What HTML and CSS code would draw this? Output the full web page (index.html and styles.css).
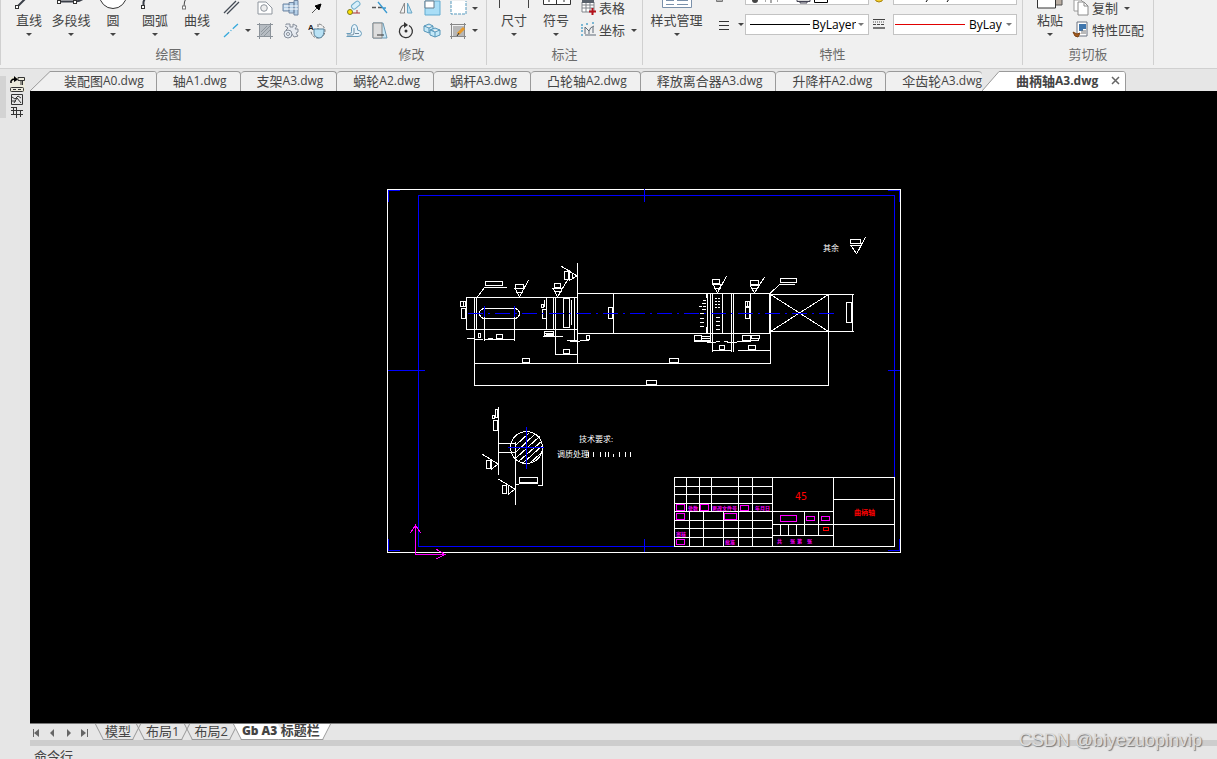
FILE: index.html
```html
<!DOCTYPE html>
<html lang="zh-CN">
<head>
<meta charset="utf-8">
<title>曲柄轴A3.dwg</title>
<link rel="stylesheet" href="styles.css">
</head>
<body>
<header class="ribbon">
  <section class="group group-draw">
    <div class="tools">
      <button class="big"><svg width="42" height="10"><path d="M10 6L18 -2" class="thick"/><rect x="7.5" y="5.5" width="3" height="3" class="node"/></svg><span>直线</span><i class="caret"></i></button>
      <button class="big"><svg width="42" height="10"><path d="M9 1.500H25Q31 1 34 -2" class="thick"/><rect x="7.500" y=".5" width="3" height="3" class="node"/><rect x="23.500" y=".5" width="3" height="3" class="node"/></svg><span>多段线</span><i class="caret"></i></button>
      <button class="big"><svg width="42" height="10"><circle cx="21" cy="-5" r="13.500" class="node"/></svg><span>圆</span><i class="caret"></i></button>
      <button class="big"><svg width="42" height="10"><path d="M9.500 5V2L11 -2" class="thick"/><rect x="7.500" y="5.500" width="3" height="3" class="node"/></svg><span>圆弧</span><i class="caret"></i></button>
      <button class="big"><svg width="42" height="10"><path d="M8 6Q8 2 10 -2" class="thin"/><rect x="6.500" y="6" width="3" height="3" class="node soft"/></svg><span>曲线</span><i class="caret"></i></button>
      <div class="icons icons-draw">
        <button aria-label="构造线"><svg width="18" height="18"><path d="M2 13L14 1M5 14L17 2" stroke="#444b55" stroke-width="1.300"/></svg></button>
        <span></span>
        <button aria-label="边界"><svg width="18" height="18"><path d="M2 2H10L16 8V14H2Z" fill="#fff" stroke="#8e959d"/><circle cx="8" cy="8" r="3.300" fill="#eee" stroke="#8e959d"/></svg></button>
        <button aria-label="轴"><svg width="18" height="18"><path d="M1 4H7V11H1ZM7 2.500H12V13H7ZM12 .5H16V15H12Z" fill="#b5d0e8" stroke="#7187a3"/><path d="M2 6H16M2 9H16" stroke="#fff"/></svg></button>
        <button aria-label="箭头"><svg width="18" height="18"><path d="M4 13L10 7" stroke="#555"/><path d="M13 4L11 10L7 6Z" fill="#000" stroke="#000"/></svg></button>
        <button aria-label="中心线"><svg width="18" height="18"><path d="M2 15L16 2" stroke="#36a9dc" stroke-width="1.300" stroke-dasharray="7 2 1 2"/></svg></button>
        <button class="drop" aria-label="更多中心线"><i class="caret"></i></button>
        <button aria-label="填充"><svg width="18" height="18"><rect x="4" y="3" width="10" height="11" fill="#b6bcc2"/><path d="M5 10L11 4M5 13L14 4M8 14L14 8" stroke="#8f979e"/><path d="M1 2.500H17M1 14.500H17M3.500 1V17M14.500 1V17" stroke="#8c939a"/></svg></button>
        <button aria-label="齿轮"><svg width="18" height="18"><path d="M4 3V2H8V5H11V2L15 4L13 7H16V10L14 11L16 14L12 15L10 12" fill="#e6eaf0" stroke="#858d99"/><path d="M3 4L6 6L4 8" fill="none" stroke="#858d99"/><circle cx="6" cy="12" r="4" fill="#e5edf5" stroke="#858d99"/><circle cx="6" cy="12" r="1.500" fill="#fff" stroke="#858d99"/></svg></button>
        <button aria-label="局部视图"><svg width="18" height="18"><path d="M10 9V2A7 7 0 1 1 3 9" fill="none" stroke="#777" stroke-dasharray="3 1"/><path d="M6 7H16V10Q15 16 11 16Q6 15 6 11Z" fill="#b9e2f5" stroke="#57819b"/><text x="0" y="8" class="mini">A</text></svg></button>
      </div>
    </div>
    <h2>绘图</h2>
  </section>
  <section class="group group-modify">
    <div class="tools">
      <div class="icons icons-modify">
        <button aria-label="复制"><svg width="18" height="18"><rect x="6" y="3" width="9" height="5" rx="2" transform="rotate(-40 10 5)" fill="#d7effa" stroke="#6faecb"/><path d="M7 13H12V10M12 13H15" fill="none" stroke="#a33"/><circle cx="5" cy="12" r="2.500" fill="#ffe100" stroke="#7c7c22"/></svg></button>
        <button aria-label="修剪"><svg width="18" height="18"><path d="M1 7.500H5M7 7.500H11" stroke="#555" stroke-width="1.500"/><path d="M12 8H15M7 2L16 13" stroke="#3a9ad1" stroke-width="1.300"/></svg></button>
        <button aria-label="镜像"><svg width="18" height="18"><path d="M7.500 3V13H3Z" fill="#f4f4f4" stroke="#888"/><path d="M10.500 3V13H15Z" fill="#bfe2f5" stroke="#68a6c5"/></svg></button>
        <button aria-label="缩放"><svg width="18" height="18"><path d="M2 1H17V15H2Z" fill="#a9def7" stroke="#62abd0"/><path d="M2 1H11V8H2Z" fill="#fff" stroke="#647b8c"/></svg></button>
        <button aria-label="拉伸"><svg width="18" height="18"><path d="M2 1V14H17V1" fill="#fff" stroke="#579abe" stroke-dasharray="3 1"/></svg></button>
        <button class="drop" aria-label="更多修改"><i class="caret"></i></button>
        <button aria-label="偏移"><svg width="18" height="18"><path d="M1.500 11.500H5Q6.500 11.500 6.500 9.500V6Q7 2.500 9.500 2.500T12.500 6V8Q16.500 8.500 16.500 11.500T13 14.500H1.500" fill="#e8f4fb" stroke="#6a9dbb"/><path d="M2 13H7Q9 13 9 11V6M10 11.500H14" fill="none" stroke="#718da1"/></svg></button>
        <button aria-label="倒角"><svg width="18" height="18"><path d="M2 1H12L16 16H2Z" fill="#c8e7f7" stroke="#6b9ab5"/><path d="M2 1H11V16H2Z" fill="#ddd" stroke="#888"/><path d="M6 13H13" stroke="#333"/></svg></button>
        <button aria-label="旋转"><svg width="18" height="18"><path d="M7 3A6.500 6.500 0 1 0 12 3.500" fill="none" stroke="#333" stroke-width="1.300"/><path d="M7 0L11 3L7 6Z" fill="#333"/><circle cx="9" cy="9" r="1.500" fill="#333"/></svg></button>
        <button aria-label="阵列"><svg width="18" height="18"><path d="M1 4L6 2L10 4V9L6 11L1 9ZM1 4L6 6L10 4M6 6V11" fill="#c4e8f8" stroke="#5595b8"/><path d="M7 8L12 6L17 8V13L12 15L7 13ZM7 8L12 10L17 8M12 10V15" fill="#c4e8f8" stroke="#5595b8"/></svg></button>
        <button aria-label="编辑填充"><svg width="18" height="18"><rect x="4" y="4" width="11" height="10" fill="#b7b7b7"/><path d="M1 2.500H17M1 14.500H17M2.500 1V17M15.500 1V17" stroke="#888"/><path d="M9 12L15 6" stroke="#e69a2c" stroke-width="3"/><path d="M8 14L10 11" stroke="#333"/></svg></button>
        <button class="drop" aria-label="更多填充"><i class="caret"></i></button>
      </div>
    </div>
    <h2>修改</h2>
  </section>
  <section class="group group-mark">
    <div class="tools">
      <button class="big"><svg width="42" height="10"><path d="M6.500 0V8M35.500 0V8" class="thin"/></svg><span>尺寸</span><i class="caret"></i></button>
      <button class="big"><svg width="42" height="10"><path d="M8.500 -1H35.500V4.500H8.500ZM21.500 -1V4M14 0V2M29 0V2" class="node"/></svg><span>符号</span><i class="caret"></i></button>
      <div class="rows">
        <button><svg width="18" height="18"><path d="M3 3H15V13H3ZM3 6H15M3 9H15M7 3V13M11 3V13" fill="#fff" stroke="#81868c"/><path d="M3 1H15V4H3Z" fill="#59616b"/><path d="M13.500 9V16M10 12.500H17" stroke="#b4121b" stroke-width="2"/></svg>表格</button>
        <button><svg width="18" height="18"><path d="M6 13V6L10 10V13M10 10Q11 6 15 5M6 14H17M14 6V12" fill="none" stroke="#5e6b78"/><path d="M2 4H5M2 7H4M2 10H5M2 14H5M7 3H9M13 2H16" stroke="#54a4ca" stroke-width="1.500" stroke-dasharray="2 1"/></svg>坐标<i class="caret"></i></button>
      </div>
    </div>
    <h2>标注</h2>
  </section>
  <section class="group group-prop">
    <div class="tools">
      <button class="big wide"><svg width="42" height="10"><path d="M6.500 -1H35.500V7.500H6.500Z" fill="#fff" stroke="#7a90aa"/><path d="M10 .5H18M10 4.500H18M21 .5H32M21 4.500H32" stroke="#7a90aa"/></svg><span>样式管理</span><i class="caret"></i></button>
      <div class="prop-grid">
        <svg width="34" height="10"><path d="M10.500 0H16.500V1.500H10.500Z" fill="none" stroke="#777"/></svg>
        <div class="combo cut"><svg width="100" height="6"><circle cx="5" cy="0" r="3" fill="#444"/><path d="M15 1H16M21 0V3M27 1H28" stroke="#555"/><path d="M47 -1V1.500H60V-1M50 1V3H57V1" fill="#ddd" stroke="#445"/><path d="M64.500 -1V2.500H77.500V-1Z" fill="#fff" stroke="#000"/></svg></div>
        <svg width="18" height="10"><circle cx="7" cy="-2" r="4" fill="#f5cf2e" stroke="#a8840d"/></svg>
        <div class="combo cut"><svg width="60" height="6"><path d="M28 2L30 -1M49 2L51 -1" stroke="#000" fill="none"/></svg></div>
        <button class="lines" aria-label="线型"><svg width="18" height="20"><path d="M4 6.500H14M4 10.500H14M4 14.500H14" stroke="#333"/></svg><i class="caret"></i></button>
        <label class="combo"><svg class="stroke" width="60" height="2"><rect width="60" height="1"/></svg><select aria-label="线型选择"><option>ByLayer</option></select><i class="caret pale"></i></label>
        <svg width="18" height="20"><path d="M1 5.500H13" stroke="#444"/><path d="M1 8H13" stroke="#555" stroke-dasharray="1 1"/><path d="M1 10.500H13" stroke="#444" stroke-dasharray="3 1"/><path d="M1 14H13" stroke="#777" stroke-width="2"/></svg>
        <label class="combo"><svg class="stroke red" width="70" height="2"><rect width="70" height="1"/></svg><select aria-label="颜色选择"><option>ByLayer</option></select><i class="caret pale"></i></label>
      </div>
    </div>
    <h2>特性</h2>
  </section>
  <section class="group group-clip">
    <div class="tools">
      <button class="big"><svg width="42" height="10"><path d="M21 -1H33V5H21Z" fill="#b9ada2" stroke="#555"/><path d="M8.500 -1H26.500V8H8.500Z" class="node"/></svg><span>粘贴</span><i class="caret"></i></button>
      <div class="rows">
        <button><svg width="18" height="18"><path d="M2 1H9L11 3V12H2Z" fill="#fff" stroke="#9a9a9a"/><path d="M6 3H12L16 7V16H6Z" fill="#fff" stroke="#8a8a8a"/><path d="M12 3V7H16" fill="none" stroke="#8a8a8a"/></svg>复制<i class="caret"></i></button>
        <button><svg width="18" height="18"><path d="M5 1H15V15H5Z" fill="#fff" stroke="#6a7380"/><path d="M7 3H14V8H11V10H7Z" fill="#3f76ad"/><path d="M9 10H14M9 12H14" stroke="#777"/><path d="M1 11L5 13L8 12L6 16L3 15Z" fill="#a65a1d" stroke="#7c4312"/></svg>特性匹配</button>
      </div>
    </div>
    <h2>剪切板</h2>
  </section>
</header>

<div class="workspace">
  <aside class="side">
    <div class="grip"></div>
    <svg width="18" height="44" fill="none" stroke="#333"><path d="M1 1H16V16H1Z" fill="#eceadb" stroke="none"/><path d="M2 7V5Q3 3 6 3" stroke="#000" stroke-width="1.500"/><path d="M5 0L9 3.500L5 6Z" fill="#000" stroke="none"/><path d="M9 1.500H15.500V4.500H9ZM12 5V9M13.500 5V9"/><rect x="1.500" y="11.500" width="13" height="4" rx="1"/><path d="M4 13.500H7M9 13.500H12"/><path d="M2.500 18.500H13.500V28.500H2.500ZM3 21L6 23L9 20L12 22M5 27L8 22L12 27M3 25H7"/><path d="M7.500 31V42M2 34.500H14M2 38.500H14M4.500 31V38M11.500 34V41M2 31.500H8"/></svg>
  </aside>
  <main class="main">
    <nav class="files" aria-label="图纸">
      <button class="file first"><svg class="slant" width="21" height="20"><path d="M0 20L20 .5H21V20Z" fill="#f0f0f0"/><path d="M0 20L20 .5H21" fill="none" stroke="#9a9a9a"/></svg>装配图<b>A0.dwg</b></button>
      <button class="file">轴<b>A1.dwg</b></button>
      <button class="file">支架<b>A3.dwg</b></button>
      <button class="file">蜗轮<b>A2.dwg</b></button>
      <button class="file">蜗杆<b>A3.dwg</b></button>
      <button class="file">凸轮轴<b>A2.dwg</b></button>
      <button class="file">释放离合器<b>A3.dwg</b></button>
      <button class="file">升降杆<b>A2.dwg</b></button>
      <button class="file last">伞齿轮<b>A3.dwg</b></button>
      <button class="file active"><svg class="slant" width="18" height="20"><path d="M0 20L17 .5H18V20Z" fill="#fff"/><path d="M0 20L17 .5H18" fill="none" stroke="#9a9a9a"/></svg>曲柄轴<b>A3.dwg</b><svg class="close" width="9" height="9"><path d="M1 1L8 8M8 1L1 8" stroke="#666" stroke-width="1.500"/></svg></button>
    </nav>
    <div class="canvas">
      <svg class="drawing" viewBox="30 91 1187 632">
        <g class="w">
          <rect x="387.500" y="189.500" width="513" height="363"/>
          <path d="M577.500 293.500H770.500M577.500 333.500H770.500M465.500 297.500H577.500M465.500 329.500H577.500M466.500 297V330M474.500 297V386M476.500 297V330"/>
          <rect x="479.500" y="308.500" width="40" height="10" rx="5"/>
          <path d="M484.500 314V341M514.500 314V341M484 339.500H514M467 338.500H474M474 339.500H483M488 338.500H493"/>
          <path d="M496.500 334.500H502.500V338.500H496.500ZM478.500 333.500H480.500V337.500H478.500Z"/>
          <path d="M485.500 281.500H502.500V285.500H485.500ZM507 287.500H484.500L477.500 297"/>
          <path d="M515.500 284.500H523.500V288.500H515.500ZM514 288.500H525M515.500 289L519.500 297M523.500 289L519.500 297L528.500 280M516 292.500H523"/>
          <path d="M554.500 283.500H560.500V287.500H554.500ZM552 288.500H563M553.500 289L557.500 297M562 289L557.500 297L567.500 280M554 291.500H562"/>
          <path d="M577.500 263V364M564.500 271.500H568.500V279.500H564.500ZM569.500 270V281M561 266L577 276L570 280M572 274V279"/>
          <path d="M546.500 297V330M553.500 297V330M555.500 297V355M574.500 297V340M571.500 300V325M563.500 298.500H569.500V327.500H563.500Z"/>
          <path d="M460.500 301.500H465.500V306.500H460.500ZM461.500 308.500H465.500V318.500H461.500ZM463.500 302V306"/>
          <path d="M542.500 309.500H546.500V318.500H542.500ZM541.500 304.500H543.500V307.500H541.500ZM544.500 300V307"/>
          <path d="M544.500 331.500H553.500V335.500H544.500ZM545 333.500H554M546 329.500H553M546 334.500H553M543 336.500H563"/>
          <path d="M567 340.500H577M570 341.500H580M580 340.500H589M586.500 335.500H589.500V339.500H586.500Z"/>
          <path d="M555 354.500H577M563.500 349.500H569.500V353.500H563.500ZM474 363.500H770M522.500 358.500H529.500V362.500H522.500ZM669.500 358.500H678.500V362.500H669.500ZM474 385.500H828M646.500 380.500H656.500V384.500H646.500Z"/>
          <path d="M613.500 293V334M608.500 307.500H612.500V318.500H608.500Z"/>
          <path d="M707.500 294V333M706.500 294V298M706.500 327V334M710.500 293V342M712.500 293V352M722.500 293V333M731.500 293V352M733.500 293V352M750.500 293V333M769.500 293V333M770.500 293V364"/>
          <path d="M703 300.500H706M702 303.500H706M703 306.500H706M699 306.500H702M702 309.500H706M700 313.500H704M700 318.500H704M700 322.500H704M700 326.500H704"/>
          <path d="M715 298.500H721M715 301.500H721M715 304.500H721M715 307.500H721" stroke-dasharray="2 1"/>
          <path d="M716 313.500H720M716 317.500H720M716 321.500H720M716 325.500H720M716 329.500H720"/>
          <path d="M712.500 279.500H719.500V283.500H712.500ZM712 284.500H721M713.500 285L717.500 293M721 285L717.500 293L726.500 276M714 288.500H721"/>
          <path d="M750.500 280.500H758.500V284.500H750.500ZM750 285.500H759M750.500 286L754.500 293M758.500 286L754.500 293L764.500 277M751 288.500H758"/>
          <path d="M780.500 278.500H796.500V282.500H780.500ZM795 284.500H779.500L770.500 293"/>
          <path d="M745.500 301.500H749.500V306.500H745.500ZM747.500 302V306M745.500 307.500H749.500V318.500H745.500Z"/>
          <path d="M770 294.500H854M770 331.500H854M828.500 294V386M852.500 294V332M770.500 294.500L828.500 331.500M828.500 294.500L770.500 331.500M846.500 302.500H851.500V322.500H846.500Z"/>
          <path d="M694.500 335.500H701.500V340.500H694.500ZM702 336.500H710M702 338.500H710M702 340.500H710M694 341.500H711M707 342.500H716M716 341.500H720M724 341.500H728M727 342.500H737M737 341.500H751"/>
          <path d="M742.500 335.500H750.500V340.500H742.500ZM751.500 335.500H759.500V338.500H751.500ZM751 340.500H758V338"/>
          <path d="M712 350.500H731M719.500 345.500H724.500V349.500H719.500ZM738 350.500H770M748.500 345.500H755.500V349.500H748.500Z"/>
          <path d="M850.500 239.500H860.500V243.500H850.500ZM850 245.500H861M851.500 246L856.500 254M861 246L856.500 254L865.500 237"/>
          <path d="M498.500 407V475M493.500 420.500H497.500V430.500H493.500ZM495.500 409.500H497.500V417.500H495.500ZM492.500 415.500H494.500V418.500H492.500ZM498 443.500H516M498 452.500H516M515.500 442V505"/>
          <circle cx="526.500" cy="447.500" r="16"/>
          <path d="M516 445L529 433M516 452L535 434M516 458L540 436M518 462L542 441M522 464L543 445M529 464L541 453"/>
          <path d="M542.500 447V485H538M519.500 477.500H537.500V482.500H519.500ZM519 483.500H538M515 484.500H519"/>
          <path d="M482 454L498 464M486.500 460.500H490.500V468.500H486.500ZM491.500 459V469L498 464M498 479L515 489M502.500 485.500H506.500V493.500H502.500ZM508.500 485V494L515 489"/>
          <path d="M588.500 452V457M593.500 452V457M600.500 452V457M605.500 452V457M608.500 452V457M613.500 454V457M619.500 452V457M625.500 452V457M630.500 452V457"/>
          <path d="M674.500 477.500H894.500V546.500H674.500ZM674 486.500H772M674 494.500H772M674 503.500H772M674 511.500H834M674 520.500H772M674 528.500H772M674 537.500H772M772.500 477V547M833.500 477V547M686.500 477V511M699.500 477V511M711.500 477V511M738.500 477V547M752.500 477V547M689.500 511V547M703.500 511V547M723.500 511V547M772 524.500H895M772 535.500H833M804.500 511V536M818.500 511V536M780.500 524V536M788.500 524V536M796.500 524V536M833 499.500H895"/>
        </g>
        <g class="b">
          <path d="M674 546.500H418.500V195.500H894.500V477M388.500 202V190.500H400M388.500 539V550.500H400M888 190.500H899.500V202M888 550.500H899.500V539M644.500 189V202M644.500 539V552M388 370.500H425M888 370.500H900M484.500 306V317M514.500 306V317M508 447.500H544M526.500 427V469"/>
          <path d="M468 313.500H838" stroke-dasharray="15 5 2 5"/>
        </g>
        <g class="m">
          <path d="M415.500 524V554.500H446M410.500 533L415.500 525L420.500 533M436 549L445 554.500L436 559"/>
          <path d="M676.500 504.500H684.500V510.500H676.500ZM700.500 504.500H708.500V510.500H700.500ZM740.500 505.500H748.500V510.500H740.500ZM676.500 513.500H684.500V519.500H676.500ZM724.500 513.500H736.500V519.500H724.500ZM676.500 539.500H684.500V544.500H676.500ZM780.500 515.500H796.500V521.500H780.500ZM806.500 516.500H814.500V520.500H806.500ZM821.500 516.500H829.500V520.500H821.500Z"/>
        </g>
        <path class="r" d="M823.500 527.500H828.500V530.500H823.500Z"/>
        <g class="note"><text x="823" y="251">其余</text><text x="579" y="442">技术要求:</text><text x="557" y="457">调质处理</text></g>
        <g class="cell"><text x="688" y="510">处数</text><text x="712" y="510">更改文件号</text><text x="755" y="510">年月日</text><text x="676" y="536">审核</text><text x="725" y="544">批准</text><text x="777" y="543">共</text><text x="790" y="543">张</text><text x="797" y="543">第</text><text x="807" y="543">张</text></g>
        <g class="title"><text x="795" y="500" class="num">45</text><text x="854" y="515">曲柄轴</text></g>
      </svg>
    </div>
    <nav class="sheets" aria-label="布局">
      <div class="arrows">
        <button aria-label="首个"><svg width="16" height="16"><path d="M1.500 5V13" stroke="#666"/><path d="M7 5V13L2 9Z"/></svg></button>
        <button aria-label="上一个"><svg width="16" height="16"><path d="M6 5V13L2 9Z"/></svg></button>
        <button aria-label="下一个"><svg width="16" height="16"><path d="M3 5V13L7 9Z"/></svg></button>
        <button aria-label="末个"><svg width="16" height="16"><path d="M1 5V13L6 9Z"/><path d="M7.500 5V13" stroke="#666"/></svg></button>
      </div>
      <button class="sheet"><span>模型</span></button>
      <button class="sheet"><span>布局1</span></button>
      <button class="sheet"><span>布局2</span></button>
      <button class="sheet current"><span><b>Gb A3</b> 标题栏</span></button>
    </nav>
    <div class="splitter"></div>
    <div class="command">命令行</div>
  </main>
</div>
<div class="watermark">CSDN @biyezuopinvip</div>
</body>
</html>
```
FILE: styles.css
```css
* { box-sizing: border-box; }
body {
  margin: 0;
  height: 100vh;
  display: flex;
  flex-direction: column;
  overflow: hidden;
  background: #e6e6e6;
  color: #444;
  font: 13px/16px "Open Sans", "Noto Sans CJK SC", sans-serif;
}
button {
  display: flex;
  align-items: center;
  margin: 0;
  padding: 0;
  border: 0;
  background: none;
  color: inherit;
  font: inherit;
  white-space: nowrap;
}
svg { display: block; flex: none; fill: none; }
.caret {
  flex: none;
  border: solid transparent;
  border-width: 3px 3px 0;
  border-top-color: #444;
}
.caret.pale { border-top-color: #777; }

/* ribbon */
.ribbon {
  display: flex;
  flex: none;
  height: 69px;
  background: #f0f0f0;
  border-bottom: 1px solid #d0d0d0;
}
.group {
  display: flex;
  flex-direction: column;
  flex: none;
  height: 65px;
  padding: 0 6px;
  border-right: 1px solid #d0d0d0;
}
.group-draw { width: 337px; border-left: 1px solid #d0d0d0; }
.group-modify { width: 150px; padding: 0 4px; }
.group-mark { width: 156px; }
.group-prop { width: 380px; padding: 0 7px; }
.group-clip { width: 131px; }
.tools { display: flex; height: 46px; }
.group h2 {
  margin: 0;
  color: #6b6b6b;
  font: inherit;
  text-align: center;
}
.big { flex: none; flex-direction: column; width: 42px; }
.big.wide { width: 53px; }
.big span { margin-top: 2px; }
.big .caret { margin-top: 5px; }
.group-draw .tools { padding-left: 1px; }
.thick { stroke: #3a3f48; stroke-width: 2; }
.thin { stroke: #444; }
.node { fill: #fff; stroke: #333; }
.soft { stroke: #777; }
.mini { font: bold 8px "Liberation Sans", sans-serif; fill: #222; }
.icons { display: grid; grid-template-rows: 22px 22px; justify-items: center; }
.icons button { align-self: start; }
.icons .drop { height: 16px; }
.icons-draw { grid-template-columns: 26px 8px 26px 26px 26px; }
.icons-modify { grid-template-columns: repeat(5, 26px) 8px; }
.rows { display: grid; grid-template-rows: 22px 22px; }
.group-mark .rows { padding-left: 2px; }
.rows button { gap: 2px; height: 16px; align-self: start; }
.group-clip .rows { padding-left: 1px; }
.rows .caret { margin-left: 4px; }
.prop-grid {
  display: grid;
  grid-template-columns: 42px 124px 24px 124px;
  grid-template-rows: 14px 21px;
}
.combo {
  display: flex;
  align-items: center;
  gap: 2px;
  height: 21px;
  padding: 0 4px;
  background: #fff;
  border: 1px solid #c3c3c3;
  overflow: hidden;
}
.combo.cut { height: 5px; border-top: 0; align-items: start; }
.combo select {
  flex: 1;
  min-width: 0;
  padding: 0;
  border: 0;
  appearance: none;
  background: none;
  color: #000;
  font: 12px/16px "Open Sans", sans-serif;
}
.combo:last-child { padding-left: 1px; gap: 4px; }
.stroke { fill: #000; }
.stroke.red { fill: #e00000; }
.prop-grid > svg { margin-left: 3px; }
.lines { gap: 11px; padding-left: 12px; }
.lines svg { margin-right: -6px; }

/* workspace */
.workspace { display: flex; flex: 1; min-height: 0; }
.side { display: flex; flex: none; width: 30px; padding-top: 7px; gap: 3px; }
.grip { width: 6px; height: 42px; background: #d3d3d3; }
.main { display: flex; flex: 1; flex-direction: column; min-width: 0; }
.files { display: flex; align-items: end; flex: none; height: 22px; }
.file {
  flex: none;
  height: 20px;
  padding: 0 13px 2px 16px;
  background: #f0f0f0;
  border-top: 1px solid #9a9a9a;
  border-right: 1px solid #9a9a9a;
  border-top-right-radius: 4px;
}
.file + .file { border-top-left-radius: 4px; }
.file b { font-size: 12px; font-weight: 400; }
.slant { margin: -1px 0 -2px; }
.file.first {
  padding: 0 12px 1px 0;
  border-top: 0;
  background: linear-gradient(#9a9a9a 1px, #f0f0f0 1px) 20px 0 no-repeat;
}
.first .slant { margin-right: 13px; }
.file.last { padding-right: 0; border-right: 0; }
.file.active {
  padding: 0 5px 1px 0;
  border-top: 0;
  background: linear-gradient(#9a9a9a 1px, #fff 1px) 17px 0 no-repeat;
  font-weight: 700;
}
.active .slant { margin-right: 16px; }
.file.active b { font-weight: 700; }
.close { margin-left: 13px; }

.canvas { flex: 1; min-height: 0; background: #000; }
.drawing { width: 100%; height: 100%; shape-rendering: crispEdges; }
.w { stroke: #fff; }
.b { stroke: #00f; }
.m { stroke: #f0f; }
.r { stroke: #f00; }
.note { fill: #fff; font-size: 8px; }
.cell { fill: #f0f; font-size: 5px; font-weight: 700; }
.title { fill: #f00; font-size: 7px; font-weight: 700; }
.num { font: 10px "DejaVu Sans Mono", monospace; }

/* sheet tabs */
.sheets { display: flex; flex: none; height: 17px; border-top: 1px solid #777; gap: 3px; }
.arrows { display: flex; width: 66px; padding-left: 2px; }
.arrows svg { fill: #666; }
.arrows button { width: 16px; }
.sheet { position: relative; height: 16px; padding: 0 6px 3px; }
.sheet span { position: relative; z-index: 1; }
.sheet::before, .sheet::after {
  content: "";
  position: absolute;
  top: 0;
  bottom: 0;
  border-bottom: 1px solid #999;
}
.sheet::before { left: 0; right: 50%; border-left: 1px solid #999; transform: skewX(27deg); }
.sheet::after { left: 50%; right: 0; border-right: 1px solid #999; transform: skewX(-27deg); }
.sheet.current { padding: 0 7px 3px 5px; font-weight: 700; }
.sheet.current::before, .sheet.current::after { background: #fff; }
.sheet b { font-size: 12px; }
.splitter { flex: none; height: 6px; background: #cdcdcd; }
.command { flex: none; height: 13px; padding: 2px 4px 0; overflow: hidden; }
.watermark {
  position: absolute;
  right: 15px;
  bottom: 8px;
  color: #dcdcdc;
  font: 18px/22px "Liberation Sans", sans-serif;
  text-shadow: 1px 1px 1px #777;
}
```
